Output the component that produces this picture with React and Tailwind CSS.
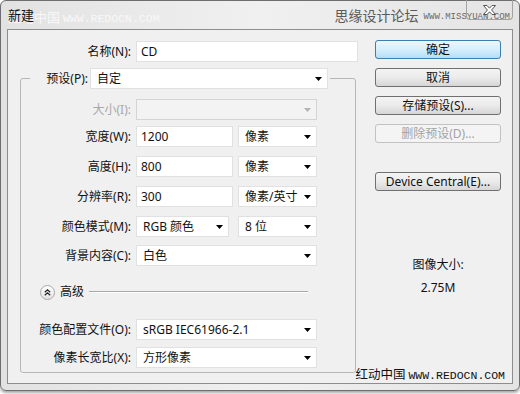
import React from 'react';

const Arrow = ({ disabled }) => (
  <svg width="7" height="4" viewBox="0 0 7 4">
    <path d="M0 0h7L3.5 4z" fill={disabled ? '#b4b4b4' : '#000'} />
  </svg>
);

const Select = ({ value, className = '', disabled }) => (
  <div
    className={`flex items-center justify-between h-[21px] border pl-[6px] pr-[5px] ${
      disabled ? 'bg-[#f3f3f3] border-[#d4d4d4]' : 'bg-white border-[#e1e1e1]'
    } ${className}`}
  >
    <span>{value}</span>
    <Arrow disabled={disabled} />
  </div>
);

const Field = ({ value, className = '' }) => (
  <div className={`flex items-center h-[21px] bg-white border border-[#e1e1e1] pl-[4px] ${className}`}>
    {value}
  </div>
);

const Row = ({ label, muted, className = '', children }) => (
  <div className={`flex items-center ${className}`}>
    <div className={`w-[110px] text-right ${muted ? 'text-[#a8a8a8]' : ''}`}>{label}</div>
    <div className="ml-[5px] flex">{children}</div>
  </div>
);

const Button = ({ children, kind, className = '' }) => {
  const look =
    kind === 'default'
      ? 'border-[#3c7fb1] bg-gradient-to-b from-[#ecf8fe] via-[#d6effc] to-[#b2def6]'
      : kind === 'disabled'
      ? 'border-[#c2c2c2] bg-[#f4f4f4] text-[#a3a3a3]'
      : 'border-[#707070] bg-gradient-to-b from-[#f4f4f4] via-[#ebebeb] to-[#d6d6d6]';
  return (
    <div className={`flex items-center justify-center h-[19px] rounded-[3px] border ${look} ${className}`}>
      {children}
    </div>
  );
};

export default function App() {
  return (
    <div className="w-[520px] h-[394px] bg-white font-['Noto_Sans','Noto_Sans_CJK_SC',sans-serif] text-[12px] leading-[16px] text-[#111]">
      <div className="relative w-[520px] h-[391px] rounded-[6px] border border-[#6e6e6e] bg-gradient-to-r from-[#e2e2e2] via-[#f0f0f0] to-[#e4e4e4] shadow-[0_2px_3px_rgba(0,0,0,0.35)]">
        {/* faint watermark behind the title */}
        <div className="absolute left-[7px] top-[8px] text-[13px] text-[#f8f8f8] font-['Noto_Sans_CJK_SC',sans-serif]">
          红动中国 <span className="font-['Liberation_Mono',monospace] text-[11.5px]">WWW.REDOCN.COM</span>
        </div>

        {/* title bar */}
        <div className="relative flex items-center h-[28px] pl-[7px] pr-[9px]">
          <span className="text-[13px]">新建</span>
          <span className="ml-auto text-[14px] text-[#5a5a5a] font-['Noto_Sans_CJK_SC',sans-serif]">思缘设计论坛</span>
          <span className="ml-[5px] mt-[3px] text-[9px] text-[#6a6a6a] font-['Liberation_Mono',monospace]">WWW.MISSYUAN.COM</span>
        </div>
        <div className="absolute top-[-1px] right-[6px] w-[47px] h-[20px] border-l border-r border-b border-[#a2a2a2] rounded-b-[4px] flex items-center justify-center">
          <svg width="13" height="10" viewBox="0 0 13 10">
            <path d="M0.5 0.5H4L6.5 3.2L9 0.5H12.5L8.6 5L12.5 9.5H9L6.5 6.8L4 9.5H0.5L4.4 5Z" fill="#fff" stroke="#555" strokeWidth="1" />
          </svg>
        </div>

        {/* client area */}
        <div className="relative ml-[6px] w-[506px] h-[355px] border border-[#8d8d8d] bg-[#f0f0f0] flex">
          <div className="w-[350px]">
            <div className="flex items-center mt-[11px]">
              <div className="w-[123px] text-right">名称(N):</div>
              <Field value="CD" className="ml-[5px] w-[222px]" />
            </div>

            <fieldset className="ml-[12px] mt-[6px] w-[336px] border border-[#b7b7b7] rounded-[3px] pb-[4px]">
              <legend className="ml-[9px] px-[2px]">
                <div className="flex items-center">
                  <div className="w-[56px] text-right">预设(P):</div>
                  <Select value="自定" className="ml-[2px] w-[238px]" />
                </div>
              </legend>

              <Row label="大小(I):" muted className="mt-[10px]">
                <Select value="" disabled className="w-[181px]" />
              </Row>
              <Row label="宽度(W):" className="mt-[6px]">
                <Field value="1200" className="w-[97px]" />
                <Select value="像素" className="ml-[5px] w-[79px]" />
              </Row>
              <Row label="高度(H):" className="mt-[9px]">
                <Field value="800" className="w-[97px]" />
                <Select value="像素" className="ml-[5px] w-[79px]" />
              </Row>
              <Row label="分辨率(R):" className="mt-[9px]">
                <Field value="300" className="w-[97px]" />
                <Select value="像素/英寸" className="ml-[5px] w-[79px]" />
              </Row>
              <Row label="颜色模式(M):" className="mt-[9px]">
                <Select value="RGB 颜色" className="w-[93px]" />
                <Select value="8 位" className="ml-[9px] w-[79px]" />
              </Row>
              <Row label="背景内容(C):" className="mt-[8px]">
                <Select value="白色" className="w-[181px]" />
              </Row>

              <div className="flex items-center mt-[18px] ml-[19px] mr-[47px]">
                <div className="flex items-center justify-center w-[15px] h-[15px] rounded-full border border-[#a9a9a9] bg-gradient-to-b from-white to-[#e3e3e3]">
                  <svg width="7" height="7" viewBox="0 0 7 7">
                    <path d="M0.8 3.2L3.5 0.8L6.2 3.2M0.8 6.2L3.5 3.8L6.2 6.2" fill="none" stroke="#222" strokeWidth="1.2" />
                  </svg>
                </div>
                <span className="ml-[5px]">高级</span>
                <div className="flex-1 ml-[5px] h-[1px] bg-[#a9a9a9] border-b border-white box-content" />
              </div>

              <Row label="颜色配置文件(O):" className="mt-[19px]">
                <Select value="sRGB IEC61966-2.1" className="w-[181px]" />
              </Row>
              <Row label="像素长宽比(X):" className="mt-[7px]">
                <Select value="方形像素" className="w-[181px]" />
              </Row>
            </fieldset>
          </div>

          <div className="ml-[17px] w-[126px] flex flex-col">
            <Button kind="default" className="mt-[10px]">确定</Button>
            <Button className="mt-[9px]">取消</Button>
            <Button className="mt-[9px]">存储预设(S)...</Button>
            <Button kind="disabled" className="mt-[9px]">删除预设(D)...</Button>
            <Button className="mt-[29px]">Device Central(E)...</Button>
            <div className="mt-[66px] text-center">图像大小:</div>
            <div className="mt-[7px] text-center">2.75M</div>
          </div>

          <div className="absolute right-[7px] bottom-[-1px] text-[12.5px] font-['Noto_Sans_CJK_SC',sans-serif]">
            红动中国 <span className="font-['Liberation_Mono',monospace] text-[11.5px]">WWW.REDOCN.COM</span>
          </div>
        </div>
      </div>
    </div>
  );
}
